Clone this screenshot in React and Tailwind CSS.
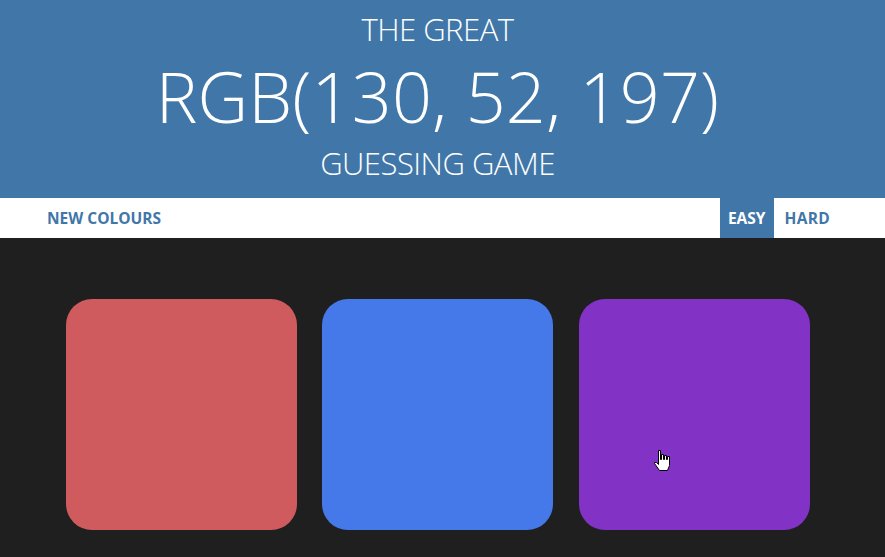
export default function App() {
  return (
    <div className="relative w-[885px] h-[557px] overflow-hidden bg-[#1f1f1f]" style={{ fontFamily: '"Open Sans", "Noto Sans", sans-serif' }}>
      <header className="h-[198px] bg-[#4177a8] text-white flex flex-col items-center pr-[10px]">
        <div className="pt-[11px] text-[31px] leading-[36px] font-light tracking-[-0.5px]">THE GREAT</div>
        <div className="mt-[5px] text-[70px] leading-[88px] font-light tracking-[0.2px]">RGB(130, 52, 197)</div>
        <div className="mt-[5px] text-[31px] leading-[36px] font-light tracking-[-0.5px]">GUESSING GAME</div>
      </header>
      <nav className="h-[40px] bg-white flex items-center justify-between text-[15.5px] font-bold text-[#4177a8]">
        <button className="pl-[47px] pt-[2px] h-full flex items-center">NEW COLOURS</button>
        <div className="flex h-full pr-[44px]">
          <button className="h-full px-[8px] pt-[2px] bg-[#4177a8] text-white flex items-center">EASY</button>
          <button className="h-full px-[11px] pt-[2px] flex items-center tracking-[0.3px]">HARD</button>
        </div>
      </nav>
      <main className="flex gap-[25px] pl-[66px] pt-[61px]">
        <div className="w-[231px] h-[231px] rounded-[26px] bg-[#cf5b5e]" />
        <div className="w-[231px] h-[231px] rounded-[26px] bg-[#4578e8]" />
        <div className="ml-[1px] w-[231px] h-[231px] rounded-[26px] bg-[#8232c5]" />
      </main>
      <svg className="absolute left-[653px] top-[449px]" width="20" height="26" viewBox="0 0 20 26">
        <path d="M5.5 1.5 h2 v9 h1 v-5 h2 v5 h1 v-4 h2 v4 h1 v-3 h2 v9 l-2 5 h-8 l-5 -7 v-1 h2 l2 2 Z" fill="#fff" stroke="#000" strokeWidth="1" />
      </svg>
    </div>
  );
}
